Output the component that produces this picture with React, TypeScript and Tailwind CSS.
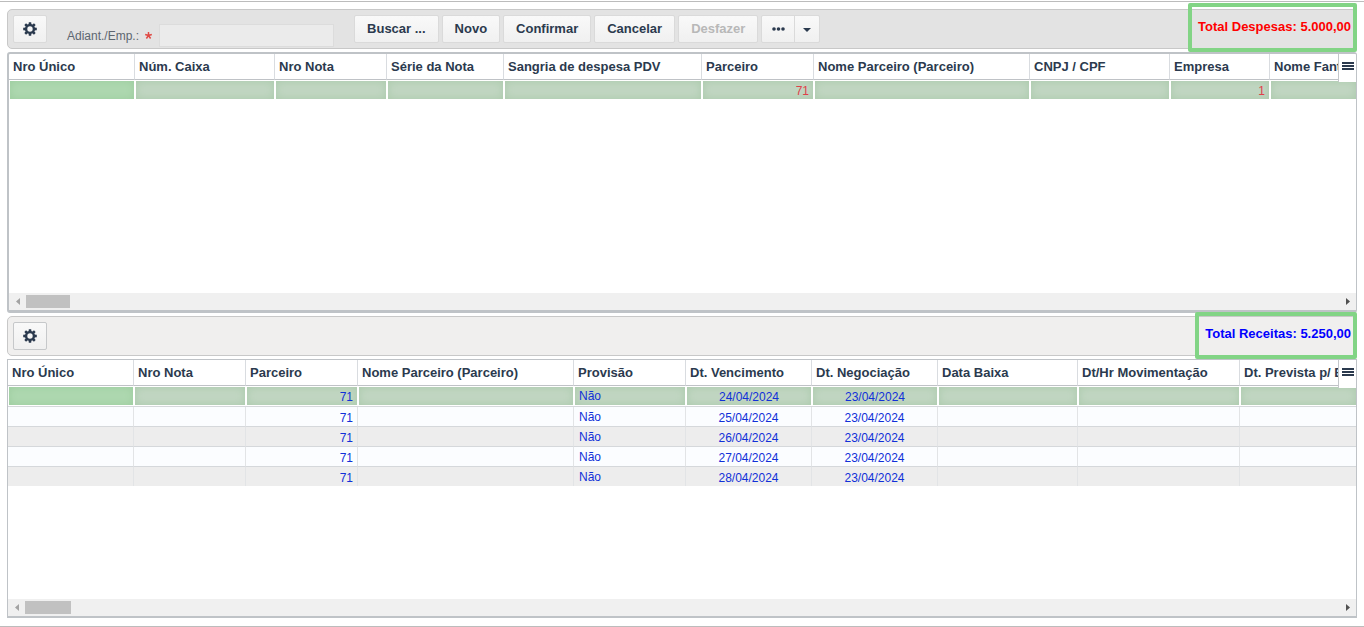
import { Fragment } from "react";

type Align = "left" | "center" | "right";

interface Column {
  title: string;
  width?: string;
  align?: Align;
}

interface DataGridProps {
  label: string;
  columns: Column[];
  rows: string[][];
  textColor: string;
  frame: string;
  thumb: string;
}

// El texto a la izquierda va un poco más arriba que los números
const cellClass: Record<Align, string> = {
  left: "pl-[5px] leading-5 text-left",
  center: "px-1 leading-[22px] text-center",
  right: "pr-1 leading-[22px] text-right",
};

const selectedCellClass: Record<Align, string> = {
  left: "pl-1 leading-[18px] text-left",
  center: "px-1 leading-5 text-center",
  right: "pr-1 leading-5 text-right",
};

const despesasColumns: Column[] = [
  { title: "Nro Único", width: "w-[126px]" },
  { title: "Núm. Caixa", width: "w-[140px]" },
  { title: "Nro Nota", width: "w-[112px]" },
  { title: "Série da Nota", width: "w-[117px]" },
  { title: "Sangria de despesa PDV", width: "w-[198px]" },
  { title: "Parceiro", width: "w-[112px]", align: "right" },
  { title: "Nome Parceiro (Parceiro)", width: "w-[216px]" },
  { title: "CNPJ / CPF", width: "w-[140px]" },
  { title: "Empresa", width: "w-[100px]", align: "right" },
  { title: "Nome Fantasia" },
];

const despesasRows = [["", "", "", "", "", "71", "", "", "1", ""]];

const receitasColumns: Column[] = [
  { title: "Nro Único", width: "w-[126px]" },
  { title: "Nro Nota", width: "w-[112px]" },
  { title: "Parceiro", width: "w-[112px]", align: "right" },
  { title: "Nome Parceiro (Parceiro)", width: "w-[216px]" },
  { title: "Provisão", width: "w-[112px]" },
  { title: "Dt. Vencimento", width: "w-[126px]", align: "center" },
  { title: "Dt. Negociação", width: "w-[126px]", align: "center" },
  { title: "Data Baixa", width: "w-[140px]" },
  { title: "Dt/Hr Movimentação", width: "w-[162px]" },
  { title: "Dt. Prevista p/ Baixa" },
];

const receitasRows = ["24", "25", "26", "27", "28"].map((dia) => [
  "", "", "71", "", "Não", `${dia}/04/2024`, "23/04/2024", "", "", "",
]);

function GearIcon() {
  return (
    <svg viewBox="-7 -7 14 14" className="w-3.5 h-3.5" fill="#2b3a4e" aria-hidden="true">
      {[0, 45, 90, 135].map((angle) => (
        <path key={angle} transform={`rotate(${angle})`} d="M-1.2-6.8h2.4l.3 3.3h-3zM-1.2 6.8h2.4l.3-3.3h-3z" />
      ))}
      <circle r="3.9" fill="none" stroke="#2b3a4e" strokeWidth="2.4" />
    </svg>
  );
}

function GearButton({ border }: { border: string }) {
  return (
    <button
      aria-label="Configurações"
      className={`flex items-center justify-center shrink-0 w-[34px] h-7 border rounded-xs bg-linear-to-b from-[#f9f9f9] to-[#f0f0f0] ${border}`}
    >
      <GearIcon />
    </button>
  );
}

function ToolbarButton({ children, disabled }: { children: string; disabled?: boolean }) {
  return (
    <button
      disabled={disabled}
      className="h-7 px-3 border border-[#dadada] rounded-xs bg-linear-to-b from-[#f9f9f9] to-[#f0f0f0] text-[13px] leading-4 font-bold whitespace-nowrap text-[#2b3a4e] disabled:text-[#b8b8b8]"
    >
      {children}
    </button>
  );
}

function Scrollbar({ thumb }: { thumb: string }) {
  return (
    <div className="flex items-center h-[17px] shrink-0 bg-[#f0f0f0]">
      <button aria-label="Rolar para a esquerda" className="flex items-center justify-center w-[17px] h-full">
        <svg viewBox="0 0 4 7" className="w-1 h-[7px]" fill="#a3a3a3"><path d="M4 0v7L0 3.5z" /></svg>
      </button>
      <div className={`h-[13px] bg-[#c1c1c1] ${thumb}`} />
      <button aria-label="Rolar para a direita" className="flex items-center justify-center w-[17px] h-full ml-auto">
        <svg viewBox="0 0 4 7" className="w-1 h-[7px]" fill="#505050"><path d="M0 0v7l4-3.5z" /></svg>
      </button>
    </div>
  );
}

function DataGrid({ label, columns, rows, textColor, frame, thumb }: DataGridProps) {
  return (
    <section className={`relative flex flex-col flex-1 min-h-0 bg-white overflow-hidden ${frame}`}>
      <div className="flex-1 overflow-hidden">
        <table aria-label={label} className="w-full table-fixed border-separate border-spacing-0">
          <thead>
            <tr>
              {columns.map((col) => (
                <th
                  key={col.title}
                  className={`h-[26px] px-1 border-b border-b-[#bfc2c6] border-r border-r-[#d9dce0] last:border-r-0 text-left text-[13px] leading-4 font-bold text-[#2b3a4e] whitespace-nowrap overflow-hidden ${col.width ?? ""}`}
                >
                  {col.title}
                </th>
              ))}
            </tr>
          </thead>
          <tbody className={`text-xs ${textColor}`}>
            {rows.map((row, r) => {
              const divider = r < rows.length - 1 ? "border-b border-b-[#d5d8db]" : "";
              return (
                <tr key={r} className="odd:bg-[#ededed] even:bg-[#fbfdff]">
                  {row.map((value, c) => {
                    const align = columns[c].align ?? "left";
                    return (
                      <Fragment key={c}>
                        {r === 0 ? (
                          <td className={`p-px bg-white last:pr-0 ${divider}`}>
                            <div
                              className={`h-[18px] ${selectedCellClass[align]} ${
                                c === 0
                                  ? "bg-[#aed8b0] shadow-[inset_0_0_8px_#9ccc9e]"
                                  : "bg-[#c1d6c2] shadow-[inset_0_0_8px_#a9c9aa]"
                              }`}
                            >
                              {value}
                            </div>
                          </td>
                        ) : (
                          <td className={`p-0 border-r border-r-[#e2e4e6] last:border-r-0 ${divider}`}>
                            <div className={`h-[19px] ${cellClass[align]}`}>{value}</div>
                          </td>
                        )}
                      </Fragment>
                    );
                  })}
                </tr>
              );
            })}
          </tbody>
        </table>
      </div>
      <Scrollbar thumb={thumb} />

      {/* Menu de colunas */}
      <button
        aria-label="Colunas"
        className="absolute top-0 right-0 flex flex-col items-center justify-center gap-px w-[18px] h-7 pb-1 bg-white border-l border-[#c4c7ca]"
      >
        <span className="w-3 h-[2px] bg-[#2b3a4e]" />
        <span className="w-3 h-[2px] bg-[#2b3a4e]" />
        <span className="w-3 h-[2px] bg-[#2b3a4e]" />
      </button>
    </section>
  );
}

export default function App() {
  return (
    <div className="h-screen min-h-[420px] pt-px bg-white font-['Liberation_Sans',Arial,sans-serif]">
      <main className="flex flex-col gap-[3px] h-full px-[7px] pt-[7px] pb-2 border-y border-[#bcbcbc]">
        {/* DESPESAS */}
        <header className="relative flex items-start h-10 shrink-0 pt-[5px] pl-[5px] border border-[#c8c8c8] rounded-[5px] bg-[#e3e3e3]">
          <GearButton border="border-[#dadada]" />
          <label htmlFor="adiantamento" className="ml-5 mt-[13px] text-xs leading-4 text-[#5d6670]">
            Adiant./Emp.:
          </label>
          <svg viewBox="0 0 8 8" className="w-[7px] h-[7px] ml-1.5 mr-px mt-[17px] shrink-0" stroke="#e04a45" strokeWidth="1.7" aria-hidden="true">
            <path d="M4 4V0M4 4l3.8-1.2M4 4l2.4 3.4M4 4L1.6 7.4M4 4L.2 2.8" />
          </svg>
          <input
            id="adiantamento"
            type="text"
            className="w-[175px] h-[23px] ml-1.5 mt-[9px] px-1 border border-[#dcdcdc] bg-[#ebebeb] text-xs"
          />
          <div className="flex gap-[3px] ml-5">
            <ToolbarButton>Buscar ...</ToolbarButton>
            <ToolbarButton>Novo</ToolbarButton>
            <ToolbarButton>Confirmar</ToolbarButton>
            <ToolbarButton>Cancelar</ToolbarButton>
            <ToolbarButton disabled>Desfazer</ToolbarButton>
            <div className="flex h-7 border border-[#dadada] rounded-xs bg-linear-to-b from-[#f9f9f9] to-[#f0f0f0]">
              <button aria-label="Mais opções" className="flex items-center justify-center w-8">
                <svg viewBox="0 0 13 4" className="w-[13px] h-1" fill="#2b3a4e">
                  <circle cx="2" cy="2" r="1.8" />
                  <circle cx="6.5" cy="2" r="1.8" />
                  <circle cx="11" cy="2" r="1.8" />
                </svg>
              </button>
              <button aria-label="Abrir menu" className="flex items-center justify-center w-[25px] border-l border-[#dadada]">
                <svg viewBox="0 0 8 4" className="w-2 h-1 mt-0.5" fill="#2b3a4e"><path d="M0 0h8L4 4z" /></svg>
              </button>
            </div>
          </div>
          <div className="absolute -top-[7px] -right-px h-[49px] pl-1.5 pr-[2px] pt-3 border-4 border-[#82d485] rounded-xs text-[13px] leading-4 font-bold text-[#ff0000] whitespace-nowrap">
            Total Despesas: 5.000,00
          </div>
        </header>
        <DataGrid
          label="Despesas"
          columns={despesasColumns}
          rows={despesasRows}
          textColor="text-[#e0404a]"
          frame="border-2 border-r border-[#bfc3c7] border-b-3 rounded-[3px]"
          thumb="w-11"
        />

        {/* RECEITAS */}
        <header className="relative flex items-start h-10 shrink-0 pt-[5px] pl-[5px] border border-[#c8c8c8] rounded-[5px] bg-[#f0efee]">
          <GearButton border="border-[#c6c8ca]" />
          <div className="absolute -top-[5px] -right-px h-[47px] pl-1.5 pr-[2px] pt-2.5 border-4 border-[#82d485] rounded-xs text-[13px] leading-4 font-bold text-[#0000ff] whitespace-nowrap">
            Total Receitas: 5.250,00
          </div>
        </header>
        <DataGrid
          label="Receitas"
          columns={receitasColumns}
          rows={receitasRows}
          textColor="text-[#1030d8]"
          frame="border border-[#bfc3c7] border-b-2"
          thumb="w-[46px]"
        />
      </main>
    </div>
  );
}
